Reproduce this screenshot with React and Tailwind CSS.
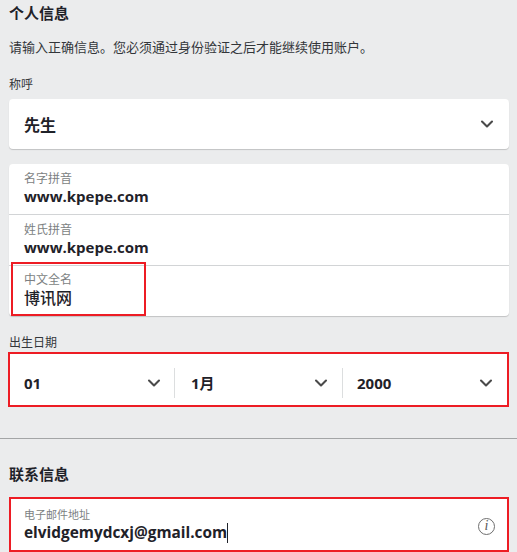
import { ChevronDown } from 'lucide-react'

const cjk = "font-['Open_Sans','Noto_Sans_CJK_SC',sans-serif]"

function NameRow({ label, value }) {
  return (
    <div className="h-[51px] border-b border-[#d2d4d6] px-[15px] pt-[6px]">
      <div className="text-xs leading-[17px] text-[#7c7f82]">{label}</div>
      <div className="text-[15px] font-bold leading-[18px] text-[#1f2229]">{value}</div>
    </div>
  )
}

function DatePart({ value, className }) {
  return (
    <div className={`flex items-center justify-between ${className}`}>
      <span className="text-[15px] font-bold text-[#1f2229]">{value}</span>
      <ChevronDown size={20} strokeWidth={2.5} className="text-[#4a4a4a]" />
    </div>
  )
}

export default function App() {
  return (
    <div className={`h-[552px] w-[517px] overflow-hidden bg-[#ebeced] ${cjk}`}>
      <div className="pl-[9px] pr-2">
        {/* 个人信息 */}
        <h2 className="pt-[3px] text-[15px] font-bold leading-[20px] text-[#1f2229]">个人信息</h2>
        <p className="mt-[14px] text-[13px] leading-[20px] text-[#33363a]">
          请输入正确信息。您必须通过身份验证之后才能继续使用账户。
        </p>
        <div className="mt-[20px] text-xs leading-[16px] text-[#33363a]">称呼</div>

        <div className="mt-[6px] flex h-[50px] items-center justify-between rounded-sm bg-white pl-[15px] pr-3 shadow-[0_1px_1px_rgba(0,0,0,0.18)]">
          <span className="pt-px text-base font-bold text-[#1f2229]">先生</span>
          <ChevronDown size={20} strokeWidth={2.5} className="text-[#4a4a4a]" />
        </div>

        {/* 姓名 */}
        <div className="relative mt-[15px] rounded-sm bg-white shadow-[0_1px_1px_rgba(0,0,0,0.18)]">
          <NameRow label="名字拼音" value="www.kpepe.com" />
          <NameRow label="姓氏拼音" value="www.kpepe.com" />
          <div className="h-[50px] px-[15px] pt-[6px]">
            <div className="text-xs leading-[16px] text-[#7c7f82]">中文全名</div>
            <div className="mt-px text-base font-medium leading-[18px] text-[#1f2229]">博讯网</div>
          </div>
          <div className="pointer-events-none absolute left-[2px] top-[98px] h-[54px] w-[135px] border-2 border-[#ed1c24]" />
        </div>

        {/* 出生日期 */}
        <div className="mt-[19px] text-xs leading-[16px] text-[#33363a]">出生日期</div>
        <div className="-ml-px mt-px flex h-[55px] items-center border-2 border-[#ed1c24] bg-white pt-[7px]">
          <DatePart value="01" className="h-[30px] w-[165px] border-r border-[#dcdedf] pl-[14px] pr-[10px]" />
          <DatePart value="1月" className="h-[30px] w-[168px] border-r border-[#dcdedf] pl-4 pr-[11px]" />
          <DatePart value="2000" className="h-[30px] flex-1 pl-[14px] pr-[11px]" />
        </div>
      </div>

      <div className="mt-[31px] border-t border-[#a3a5a6]" />

      <div className="pl-[9px] pr-2">
        {/* 联系信息 */}
        <h2 className="mt-[25px] text-[15px] font-bold leading-[20px] text-[#1f2229]">联系信息</h2>
        <div className="mt-[13px] flex h-[55px] items-center justify-between border-2 border-[#ed1c24] bg-white pl-[13px] pr-[12px]">
          <div>
            <div className="text-[11px] leading-[17px] text-[#7c7f82]">电子邮件地址</div>
            <div className="flex h-[20px] items-center text-[15.4px] font-bold text-[#1f2229]">
              elvidgemydcxj@gmail.com
              <span className="h-[20px] w-px bg-[#1f2229]" />
            </div>
          </div>
          <div className="mt-[3px] flex h-[17px] w-[17px] items-center justify-center rounded-full border border-[#6e6e6e] font-['Liberation_Serif',serif] text-sm italic leading-none text-[#5a5a5a]">
            i
          </div>
        </div>
      </div>
    </div>
  )
}
